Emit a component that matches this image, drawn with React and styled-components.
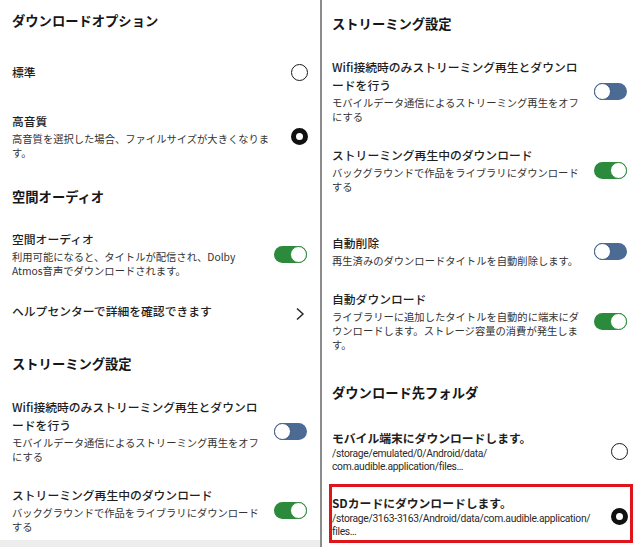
import React from 'react'
import styled, {createGlobalStyle} from 'styled-components'

const GlobalStyle = createGlobalStyle`
    html, body {
        margin: 0;
        padding: 0;
        background: #ededed;
    }
    body {
        font-family: "Noto Sans CJK JP", "Noto Sans", sans-serif;
        color: #222;
    }
`

const leftItems = [
    {type: 'heading', text: 'ダウンロードオプション', mt: 0},
    {type: 'radio', title: ['標準'], on: false, mt: 32},
    {type: 'radio', title: ['高音質'], desc: ['高音質を選択した場合、ファイルサイズが大きくなりま', 'す。'], on: true, mt: 31},
    {type: 'heading', text: '空間オーディオ', mt: 27},
    {type: 'toggle', title: ['空間オーディオ'], desc: ['利用可能になると、タイトルが配信され、Dolby', 'Atmos音声でダウンロードされます。'], on: true, mt: 23},
    {type: 'link', title: ['ヘルプセンターで詳細を確認できます'], mt: 23},
    {type: 'heading', text: 'ストリーミング設定', mt: 33},
    {type: 'toggle', title: ['Wifi接続時のみストリーミング再生とダウンロ', 'ードを行う'], desc: ['モバイルデータ通信によるストリーミング再生をオフ', 'にする'], on: false, mt: 24},
    {type: 'toggle', title: ['ストリーミング再生中のダウンロード'], desc: ['バックグラウンドで作品をライブラリにダウンロード', 'する'], on: true, mt: 22},
]

const rightItems = [
    {type: 'heading', text: 'ストリーミング設定', mt: 0},
    {type: 'toggle', title: ['Wifi接続時のみストリーミング再生とダウンロ', 'ードを行う'], desc: ['モバイルデータ通信によるストリーミング再生をオフ', 'にする'], on: false, mt: 24},
    {type: 'toggle', title: ['ストリーミング再生中のダウンロード'], desc: ['バックグラウンドで作品をライブラリにダウンロード', 'する'], on: true, mt: 22},
    {type: 'toggle', title: ['自動削除'], desc: ['再生済みのダウンロードタイトルを自動削除します。'], on: false, mt: 40},
    {type: 'toggle', title: ['自動ダウンロード'], desc: ['ライブラリーに追加したタイトルを自動的に端末にダ', 'ウンロードします。ストレージ容量の消費が発生しま', 'す。'], on: true, mt: 22},
    {type: 'heading', text: 'ダウンロード先フォルダ', mt: 31},
    {type: 'radio', strong: true, title: ['モバイル端末にダウンロードします。'], path: ['/storage/emulated/0/Android/data/', 'com.audible.application/files…'], on: false, mt: 26},
    {type: 'radio', strong: true, highlight: true, title: ['SDカードにダウンロードします。'], path: ['/storage/3163-3163/Android/data/com.audible.application/', 'files…'], on: true, mt: 11},
]

const Lines = ({lines}) => lines.map((line, i) => (
    <React.Fragment key={i}>{line}{i < lines.length - 1 && <br/>}</React.Fragment>
))

const Control = ({item}) => {
    if (item.type === 'toggle') {
        return <Toggle $on={item.on}><Knob $on={item.on}/></Toggle>
    }
    if (item.type === 'radio') {
        return <Radio $on={item.on}/>
    }
    if (item.type === 'link') {
        return (
            <Chevron width="10" height="14" viewBox="0 0 10 14">
                <polyline points="2,1.5 8,7 2,12.5" fill="none" stroke="#222" strokeWidth="1.4"/>
            </Chevron>
        )
    }
    return null
}

const Panel = ({items, side}) => (
    <PanelBox $side={side}>
        {items.map((item, index) => {
            if (item.type === 'heading') {
                return <Heading key={index} $mt={item.mt}>{item.text}</Heading>
            }
            return (
                <Row key={index} $mt={item.mt} $highlight={item.highlight}>
                    <TextBlock>
                        <Title $strong={item.strong}><Lines lines={item.title}/></Title>
                        {item.desc && <Desc><Lines lines={item.desc}/></Desc>}
                        {item.path && <Path><Lines lines={item.path}/></Path>}
                    </TextBlock>
                    <Control item={item}/>
                </Row>
            )
        })}
    </PanelBox>
)

const App = () => (
    <>
        <GlobalStyle/>
        <Screen>
            <Panel items={leftItems} side="left"/>
            <Divider/>
            <Panel items={rightItems} side="right"/>
        </Screen>
    </>
)

const Screen = styled.div`
    display: flex;
    align-items: flex-start;
    width: 640px;
    height: 547px;
    overflow: hidden;
`

const PanelBox = styled.div`
    display: flex;
    flex-direction: column;
    box-sizing: border-box;
    background: #fff;
    width: ${props => props.$side === 'left' ? '320px' : '318px'};
    height: ${props => props.$side === 'left' ? '540px' : '547px'};
    padding: ${props => props.$side === 'left' ? '11px 13px 0 12px' : '14px 13px 0 10px'};
`

const Divider = styled.div`
    width: 2px;
    height: 547px;
    background: #8c8c8c;
    flex-shrink: 0;
`

const Heading = styled.h2`
    margin: ${props => props.$mt}px 0 0;
    font-size: 13.3px;
    line-height: 20px;
    font-weight: 700;
    color: #161616;
    white-space: nowrap;
`

const Row = styled.div`
    display: flex;
    align-items: center;
    justify-content: space-between;
    margin-top: ${props => props.$mt}px;
    ${props => props.$highlight && `
        border: 3px solid #e0141b;
        margin-left: -3px;
        margin-right: -6px;
        padding: 7px 3px 2px 0;
    `}
`

const TextBlock = styled.div`
    display: flex;
    flex-direction: column;
`

const Title = styled.div`
    font-size: 11.8px;
    line-height: 18px;
    font-weight: ${props => props.$strong ? 700 : 500};
    color: #1e1e1e;
    white-space: nowrap;
`

const Desc = styled.div`
    margin-top: 2px;
    font-size: 10.3px;
    line-height: 14px;
    color: #333;
    white-space: nowrap;
`

const Path = styled.div`
    font-family: Roboto, "Liberation Sans", sans-serif;
    font-size: 10.3px;
    letter-spacing: -0.3px;
    line-height: 13px;
    color: #2a2a2a;
    white-space: nowrap;
`

const Toggle = styled.div`
    display: flex;
    justify-content: ${props => props.$on ? 'flex-end' : 'flex-start'};
    flex-shrink: 0;
    width: 33px;
    height: 17px;
    border-radius: 9px;
    background: ${props => props.$on ? '#2b8a3b' : '#4b6b95'};
`

const Knob = styled.div`
    box-sizing: border-box;
    width: 17px;
    height: 17px;
    border-radius: 50%;
    background: #fff;
    border: 1.5px solid ${props => props.$on ? '#2b8a3b' : '#3d5a82'};
`

const Radio = styled.div`
    box-sizing: border-box;
    flex-shrink: 0;
    width: 17px;
    height: 17px;
    margin-right: -0.5px;
    border-radius: 50%;
    background: #fff;
    border: ${props => props.$on ? '5.5px solid #111' : '1.6px solid #1a1a1a'};
`

const Chevron = styled.svg`
    flex-shrink: 0;
    margin-top: 6px;
    margin-right: 2px;
`

export default App
